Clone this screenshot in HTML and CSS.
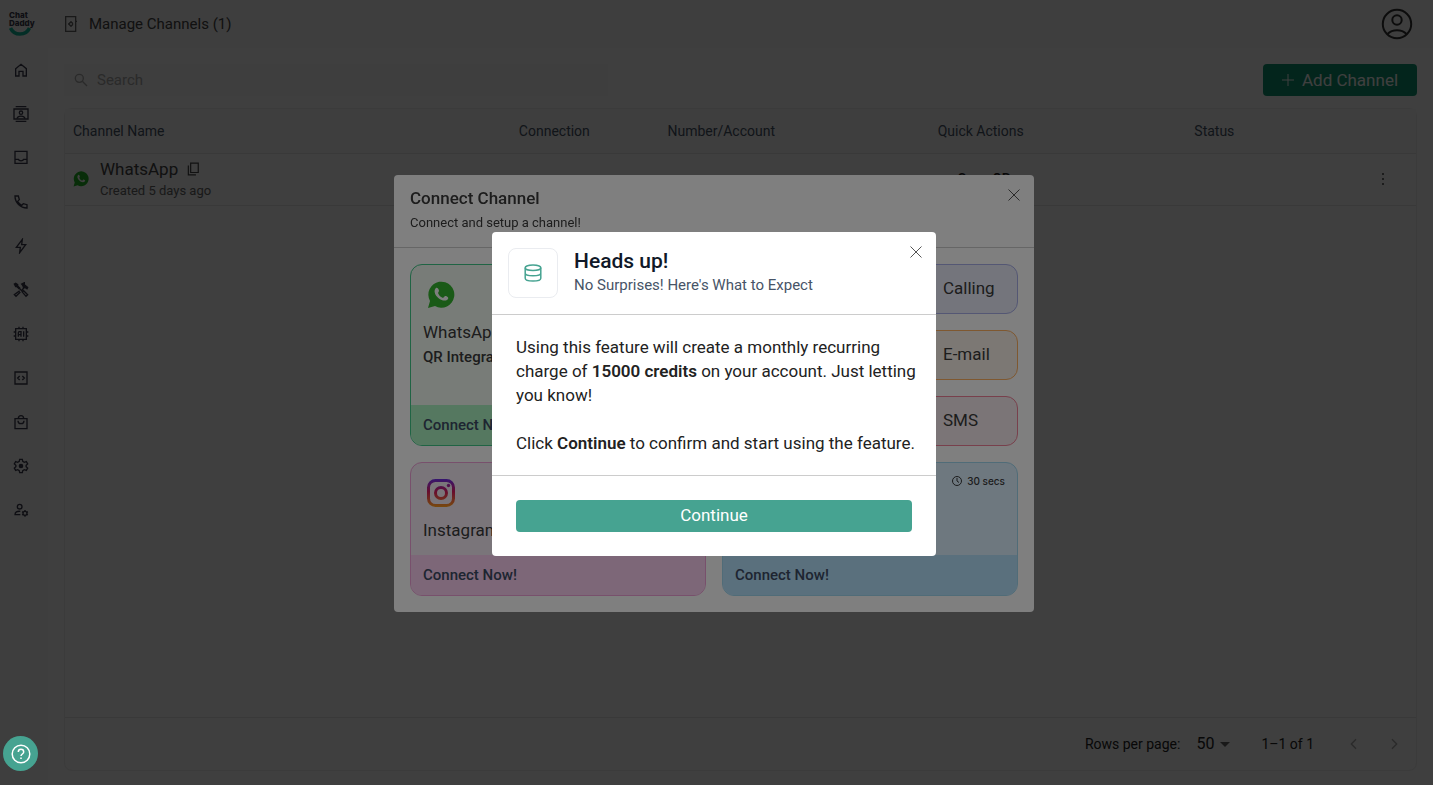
FILE: index.html
```
<!DOCTYPE html>
<html lang="en">
<head>
  <meta charset="UTF-8">
  <title>Manage Channels</title>
  <meta name="viewport" content="width=device-width, initial-scale=1.0">
  <link rel="stylesheet" href="styles.css">
</head>
<body>

  <div class="app">
    <nav class="sidebar" aria-label="Main">
      <a class="logo" href="#"><span>Chat<br>Daddy</span>
        <svg width="24" height="10" viewBox="0 0 24 10"><path d="M1.500 1C5 9 17 9 20.500 1" fill="none" stroke="#0fb89a" stroke-width="3.500"/></svg>
      </a>
      <a href="#" aria-label="Home"><svg class="icon" viewBox="0 0 24 24"><path d="M4 10l8-6.500 8 6.500v11h-5v-7H9v7H4z"/></svg></a>
      <a href="#" aria-label="Contacts"><svg class="icon" viewBox="0 0 24 24"><path d="M4 1h16M4 23h16M1.500 4.500h21v15h-21z"/><circle cx="12" cy="10" r="2.500"/><path d="M6 19c1-5 11-5 12 0"/></svg></a>
      <a href="#" aria-label="Inbox"><svg class="icon" viewBox="0 0 24 24"><path d="M3 2h18v18H3zM3 14h5c1 3 7 3 8 0h5"/></svg></a>
      <a href="#" aria-label="Calls"><svg class="icon" viewBox="0 0 24 24"><path d="M3 3h5l1.500 5.500L7 11c1.500 3 3 4.500 6 6l2.500-2.500L21 16v5C11 21 3 13 3 3z"/></svg></a>
      <a href="#" aria-label="Automation"><svg class="icon" viewBox="0 0 24 24"><path d="M14 2L5 14h6l-1 8 9-12h-6z"/></svg></a>
      <a href="#" aria-label="Tools"><svg class="icon" viewBox="0 0 24 24"><path d="M14 15l2-2 6 6-2.500 2.500zM10 13l-8 6 2.500 2.500L11 15M9 9l4 4 3-4"/><path class="solid" d="M2 3l2-1 3 2v2l3 3-1 1-3-3H4zM13 3l4-2v3l5 4-1 2-3-2-2 1-1-3z"/></svg></a>
      <a href="#" aria-label="AI"><svg class="icon" viewBox="0 0 24 24"><path d="M4 4h16v16H4zM9 1v3M15 1v3M9 20v3M15 20v3M1 9h3M1 15h3M20 9h3M20 15h3M8 16v-6l1-1.500h3V16M8 13h4M16 8v8"/></svg></a>
      <a href="#" aria-label="Developers"><svg class="icon" viewBox="0 0 24 24"><path d="M3 3h18v18H3zM10 9l-3 3 3 3M14 9l3 3-3 3"/></svg></a>
      <a href="#" aria-label="Shop"><svg class="icon" viewBox="0 0 24 24"><path d="M3 7h18v15H3zM8 7c0-6 8-6 8 0M7.500 10c0 6 9 6 9 0"/></svg></a>
      <a href="#" aria-label="Settings"><svg class="icon" viewBox="0 0 24 24"><path d="M10 2h4l.6 3 2.400 1.400 3-1 2 3.400L19.700 11v2l2.300 2.200-2 3.400-3-1-2.400 1.400-.6 3h-4l-.6-3L7 17.600l-3 1-2-3.400L4.300 13v-2L2 8.800l2-3.400 3 1L9.400 5z"/><circle class="solid" cx="12" cy="12" r="2.500"/></svg></a>
      <a href="#" aria-label="Team"><svg class="icon" viewBox="0 0 24 24"><circle cx="10" cy="7" r="3.500"/><path d="M11 14c-5-.5-8 1-8 5h8"/><circle cx="18" cy="17" r="3"/><path d="M18 12v2M18 20v2M13.700 14.500l1.700 1M20.600 18.500l1.700 1M13.700 19.500l1.700-1M20.600 15.500l1.700-1"/></svg></a>
    </nav>

    <div class="content">
      <header class="topbar">
        <svg class="icon" viewBox="0 0 24 24"><path d="M4 1h15v22H4zM19 8h2"/><circle cx="12" cy="12" r="2.500"/><path d="M12 7.500v2M12 14.500v2M7.500 12h2"/></svg>
        <h1>Manage Channels <span>(1)</span></h1>
        <button class="avatar" aria-label="Account"><svg width="32" height="32" viewBox="0 0 32 32"><circle cx="16" cy="16" r="14.200"/><circle cx="16" cy="12" r="4.700"/><path d="M6.500 26c5-5 14-5 19 0"/></svg></button>
      </header>

      <main>
        <div class="toolbar">
          <label class="search">
            <svg class="icon" viewBox="0 0 24 24"><circle cx="9.500" cy="9.500" r="6"/><path d="M14 14l7 7"/></svg>
            <input type="search" placeholder="Search" aria-label="Search">
          </label>
          <button class="add"><svg width="12" height="12" viewBox="0 0 12 12"><path d="M6 0v12M0 6h12"/></svg>Add Channel</button>
        </div>

        <section class="panel">
          <table>
            <thead>
              <tr><th class="name">Channel Name</th><th class="connection">Connection</th><th class="number">Number/Account</th><th class="quick">Quick Actions</th><th>Status</th><th class="more"></th></tr>
            </thead>
            <tbody>
              <tr>
                <td>
                  <div class="channel">
                    <svg width="16" height="16" viewBox="0 0 28 28"><path d="M1 27l2-7A13 13 0 1 1 8 25z" fill="#22b526"/><path d="M9 7c-5 5 5 15 11 12 3-2 0-4-2-4l-2 2c-3-1-4-3-5-5l1-2c0-2-2-4-3-3z" fill="#fff"/></svg>
                    <div>
                      <div class="title">WhatsApp <svg class="icon" viewBox="0 0 24 24"><path d="M8 2h13v16H8zM4 6v16h13"/></svg></div>
                      <div class="created">Created 5 days ago</div>
                    </div>
                  </div>
                </td>
                <td></td><td></td><td><span class="action">Scan QR</span></td><td></td>
                <td><button class="dots" aria-label="More"><svg width="4" height="14" viewBox="0 0 4 14"><circle cx="2" cy="2" r="1"/><circle cx="2" cy="7" r="1"/><circle cx="2" cy="12" r="1"/></svg></button></td>
              </tr>
            </tbody>
          </table>
          <footer class="pager">
            <label for="rows">Rows per page:</label>
            <span class="rows">
              <select id="rows"><option>50</option><option>100</option></select>
              <svg width="10" height="5" viewBox="0 0 10 5"><path d="M0 0h10L5 5z"/></svg>
            </span>
            <span class="range">1–1 of 1</span>
            <button aria-label="Previous page"><svg class="icon" viewBox="0 0 24 24"><path d="M15 5l-7 7 7 7"/></svg></button>
            <button aria-label="Next page"><svg class="icon" viewBox="0 0 24 24"><path d="M9 5l7 7-7 7"/></svg></button>
          </footer>
        </section>
      </main>
    </div>
  </div>

  <div class="backdrop">
    <section class="connect" role="dialog" aria-labelledby="connect-title">
      <header>
        <h2 id="connect-title">Connect Channel</h2>
        <p>Connect and setup a channel!</p>
        <button class="close" aria-label="Close"><svg width="12" height="12" viewBox="0 0 12 12"><path d="M.5.5l11 11M11.500.5l-11 11"/></svg></button>
      </header>
      <div class="cards">
        <article class="card whatsapp">
          <div class="info">
            <svg width="28" height="28" viewBox="0 0 28 28"><path d="M1 27l2-7A13 13 0 1 1 8 25z" fill="#35b42e"/><path d="M9 7c-5 5 5 15 11 12 3-2 0-4-2-4l-2 2c-3-1-4-3-5-5l1-2c0-2-2-4-3-3z" fill="#fff"/></svg>
            <h3>WhatsApp</h3>
            <p>QR Integration</p>
          </div>
          <button>Connect Now!</button>
        </article>
        <div class="stack">
          <button class="tile calling">Calling</button>
          <button class="tile email">E-mail</button>
          <button class="tile sms">SMS</button>
        </div>
        <article class="card instagram">
          <div class="info">
            <svg width="28" height="28" viewBox="0 0 28 28" fill="none" stroke="url(#ig)" stroke-width="3">
              <defs><linearGradient id="ig" gradientUnits="userSpaceOnUse" x1="14" y1="0" x2="14" y2="28"><stop offset="0" stop-color="#6a2be0"/><stop offset=".45" stop-color="#d01a5c"/><stop offset="1" stop-color="#f0941c"/></linearGradient></defs>
              <rect x="1.500" y="1.500" width="25" height="25" rx="7"/><circle cx="14" cy="14" r="5.500"/><circle cx="21.500" cy="6.500" r="1.700" fill="url(#ig)" stroke="none"/>
            </svg>
            <h3>Instagram</h3>
          </div>
          <button>Connect Now!</button>
        </article>
        <article class="card blue">
          <div class="info">
            <span class="time"><svg width="10" height="10" viewBox="0 0 10 10"><circle cx="5" cy="5" r="4.500"/><path d="M5 2v3l2 1.500"/></svg>30 secs</span>
          </div>
          <button>Connect Now!</button>
        </article>
      </div>
    </section>
  </div>

  <div class="backdrop front">
    <section class="notice" role="dialog" aria-labelledby="notice-title">
      <header>
        <span class="badge"><svg width="20" height="20" viewBox="0 0 20 20"><ellipse cx="10" cy="4.800" rx="7.800" ry="2.800"/><path d="M2.200 4.800v10.400c0 3.700 15.600 3.700 15.600 0V4.800M2.200 10c0 3.700 15.600 3.700 15.600 0"/></svg></span>
        <div>
          <h2 id="notice-title">Heads up!</h2>
          <p>No Surprises! Here's What to Expect</p>
        </div>
        <button class="close" aria-label="Close"><svg width="12" height="12" viewBox="0 0 12 12"><path d="M.5.5l11 11M11.500.5l-11 11"/></svg></button>
      </header>
      <div class="message">
        <p>Using this feature will create a monthly recurring charge of <strong>15000 credits</strong> on your account. Just letting you know!</p>
        <p>Click <strong>Continue</strong> to confirm and start using the feature.</p>
      </div>
      <footer><button class="continue">Continue</button></footer>
    </section>
  </div>

  <button class="help" aria-label="Help"><svg width="20" height="20" viewBox="0 0 20 20"><circle cx="10" cy="10" r="8.800"/><path d="M7.300 8c0-3.600 5.400-3.600 5.400 0 0 2-2.700 2-2.700 4M10 13.500v1.500"/></svg></button>

</body>
</html>
```
FILE: styles.css
```
* {
  box-sizing: border-box;
}

body {
  margin: 0;
  font-family: Roboto, "Liberation Sans", sans-serif;
  font-size: 14px;
  line-height: 20px;
  color: #222;
  background: #fcfcfc;
}

h1, h2, h3, p {
  margin: 0;
}

button, input, select {
  font: inherit;
  color: inherit;
  background: none;
  border: none;
  padding: 0;
}

button {
  cursor: pointer;
}

svg {
  display: block;
  flex: none;
}

.icon {
  width: 16px;
  height: 16px;
  fill: none;
  stroke: currentColor;
  stroke-width: 2;
}

.icon .solid {
  fill: currentColor;
}

.app {
  display: flex;
  height: 100vh;
}

.sidebar {
  width: 48px;
  padding: 11px 9px 0;
  display: flex;
  flex-direction: column;
  background: #f9f9f9;
}

.sidebar a {
  height: 44px;
  padding: 3px 4px;
  color: #3b3b4c;
}

.sidebar .logo {
  height: 48px;
  padding: 0;
  font-family: Inter, sans-serif;
  font-size: 8px;
  line-height: 8px;
  font-weight: 800;
  text-decoration: none;
}

.content {
  flex: 1;
  display: flex;
  flex-direction: column;
}

.topbar {
  height: 48px;
  display: flex;
  align-items: center;
  gap: 10px;
  padding: 0 20px 0 15px;
  color: #444;
  background: #f9f9f9;
}

.topbar .icon {
  color: #666;
}

.topbar h1 {
  font-size: 15px;
  font-weight: 400;
}

.avatar {
  margin-left: auto;
}

.avatar svg {
  fill: none;
  stroke: #333;
  stroke-width: 2;
}

main {
  flex: 1;
  display: flex;
  flex-direction: column;
  gap: 12px;
  padding: 16px 16px 14px;
}

.toolbar {
  display: flex;
  justify-content: space-between;
}

.search {
  width: 544px;
  display: flex;
  align-items: center;
  gap: 8px;
  padding: 0 9px;
  color: #aaa;
  background: #f9f9f9;
}

.search input {
  flex: 1;
  font-size: 15px;
}

.search input::placeholder {
  color: #aaa;
  opacity: 1;
}

.add {
  width: 154px;
  height: 32px;
  display: flex;
  align-items: center;
  justify-content: center;
  gap: 8px;
  border-radius: 4px;
  background: #0f9670;
  color: #fff;
  font-size: 17px;
}

.add svg {
  stroke: currentColor;
}

.panel {
  flex: 1;
  display: flex;
  flex-direction: column;
  border: 1px solid #eee;
  border-radius: 8px;
}

table {
  width: 100%;
  table-layout: fixed;
  border-collapse: collapse;
}

th, td {
  padding: 0 8px;
  text-align: left;
  font-weight: 400;
  border-bottom: 1px solid #e4e4e4;
}

th {
  height: 44px;
  color: #475467;
  background: #f9f9f9;
}

td {
  height: 52px;
}

.name { width: 33%; }
.connection { width: 11%; }
.number { width: 20%; }
.quick { width: 19%; }
.more { width: 50px; }

.channel {
  display: flex;
  align-items: center;
  gap: 11px;
}

.title {
  display: flex;
  align-items: center;
  gap: 8px;
  font-size: 17px;
  line-height: 24px;
  color: #444;
}

.title .icon {
  width: 14px;
  height: 14px;
}

.created {
  font-size: 13px;
  color: #666;
}

.action {
  padding-left: 20px;
  font-weight: 500;
}

.dots {
  display: block;
  padding: 0 7px;
}

.dots svg {
  fill: #444;
}

.pager {
  height: 53px;
  margin-top: auto;
  display: flex;
  align-items: center;
  justify-content: flex-end;
  gap: 16px;
  padding-right: 10px;
  border-top: 1px solid #e4e4e4;
}

.rows {
  display: flex;
  align-items: center;
  font-size: 16px;
}

.rows select {
  width: 36px;
  margin-right: -12px;
  appearance: none;
}

.rows svg {
  fill: #666;
  pointer-events: none;
}

.pager button {
  width: 24px;
  padding: 4px;
  color: #aaa;
}

.range {
  margin: 0 12px 0 15px;
}

.backdrop {
  position: fixed;
  inset: 0;
  display: flex;
  align-items: center;
  justify-content: center;
  padding: 2px 5px 0 0;
  background: rgba(0, 0, 0, 0.5);
}

.front {
  padding-top: 3px;
}

.connect {
  width: 640px;
  border-radius: 4px;
  color: #3a3a3a;
  background: #fff;
}

.connect header {
  position: relative;
  padding: 11px 16px 14px;
  border-bottom: 1px solid #ccc;
}

.connect h2 {
  font-size: 17px;
  line-height: 24px;
  font-weight: 500;
}

.connect header p {
  margin-top: 3px;
  font-size: 13px;
}

.close {
  position: absolute;
  top: 14px;
  right: 14px;
}

.close svg {
  stroke: #555;
}

.cards {
  display: grid;
  grid-template-columns: 1fr 1fr;
  gap: 16px;
  padding: 16px;
}

.card {
  display: flex;
  flex-direction: column;
  border: 1px solid;
  border-radius: 12px;
  overflow: hidden;
}

.info {
  flex: 1;
  padding: 16px 12px 13px;
}

.info > svg {
  margin: 0 4px 11px;
}

.info h3 {
  font-size: 17px;
  line-height: 24px;
  font-weight: 400;
}

.info p {
  margin-top: 3px;
  font-size: 15px;
  font-weight: 500;
}

.card button {
  height: 40px;
  padding: 0 12px;
  text-align: left;
  font-size: 15px;
  font-weight: 500;
  color: #3c4a63;
}

.whatsapp {
  border-color: #40c888;
  background: #f0f8f1;
}

.whatsapp button {
  background: #aaf0c0;
}

.instagram {
  border-color: #f0a0d8;
  background: #f5ebf5;
}

.instagram button {
  background: #facef0;
}

.blue {
  border-color: #a0d8f0;
  background: #dcf0ff;
}

.blue button {
  background: #b4e0fb;
}

.blue .info {
  padding-top: 8px;
}

.time {
  display: flex;
  align-items: center;
  justify-content: flex-end;
  gap: 5px;
  font-family: Inter, sans-serif;
  font-size: 10px;
  font-weight: 500;
}

.time svg {
  fill: none;
  stroke: currentColor;
}

.stack {
  display: flex;
  flex-direction: column;
  align-items: flex-end;
  gap: 16px;
}

.tile {
  width: 140px;
  height: 50px;
  padding: 0 0 2px 64px;
  text-align: left;
  font-size: 17px;
  border: 1px solid;
  border-radius: 12px;
}

.calling {
  border-color: #a8aee8;
  background: #e8eaf8;
}

.email {
  border-color: #ffb060;
  background: #f8f0e8;
}

.sms {
  border-color: #f08098;
  background: #f6ebee;
}

.notice {
  width: 444px;
  border-radius: 4px;
  background: #fff;
}

.notice header {
  position: relative;
  display: flex;
  gap: 16px;
  padding: 16px;
  border-bottom: 1px solid #ccc;
}

.badge {
  width: 50px;
  height: 50px;
  display: flex;
  align-items: center;
  justify-content: center;
  border: 1px solid #eaecf0;
  border-radius: 8px;
}

.badge svg {
  fill: none;
  stroke: #46a391;
  stroke-width: 1.5;
}

.notice h2 {
  font-size: 21px;
  line-height: 27px;
  font-weight: 500;
  color: #101828;
}

.notice header p {
  font-size: 15px;
  color: #475467;
}

.message {
  display: flex;
  flex-direction: column;
  gap: 24px;
  padding: 20px 20px 20px 24px;
  font-size: 17px;
  line-height: 24px;
}

.message strong {
  font-weight: 600;
}

.notice footer {
  padding: 24px;
  border-top: 1px solid #ccc;
}

.continue {
  display: block;
  width: 100%;
  height: 32px;
  padding-bottom: 2px;
  border-radius: 4px;
  background: #46a391;
  color: #fff;
  font-size: 17px;
}

.help {
  position: fixed;
  left: 3px;
  bottom: 14px;
  width: 35px;
  height: 35px;
  display: flex;
  align-items: center;
  justify-content: center;
  border-radius: 50%;
  background: #46a391;
}

.help svg {
  fill: none;
  stroke: #fff;
  stroke-width: 1.5;
}
```
